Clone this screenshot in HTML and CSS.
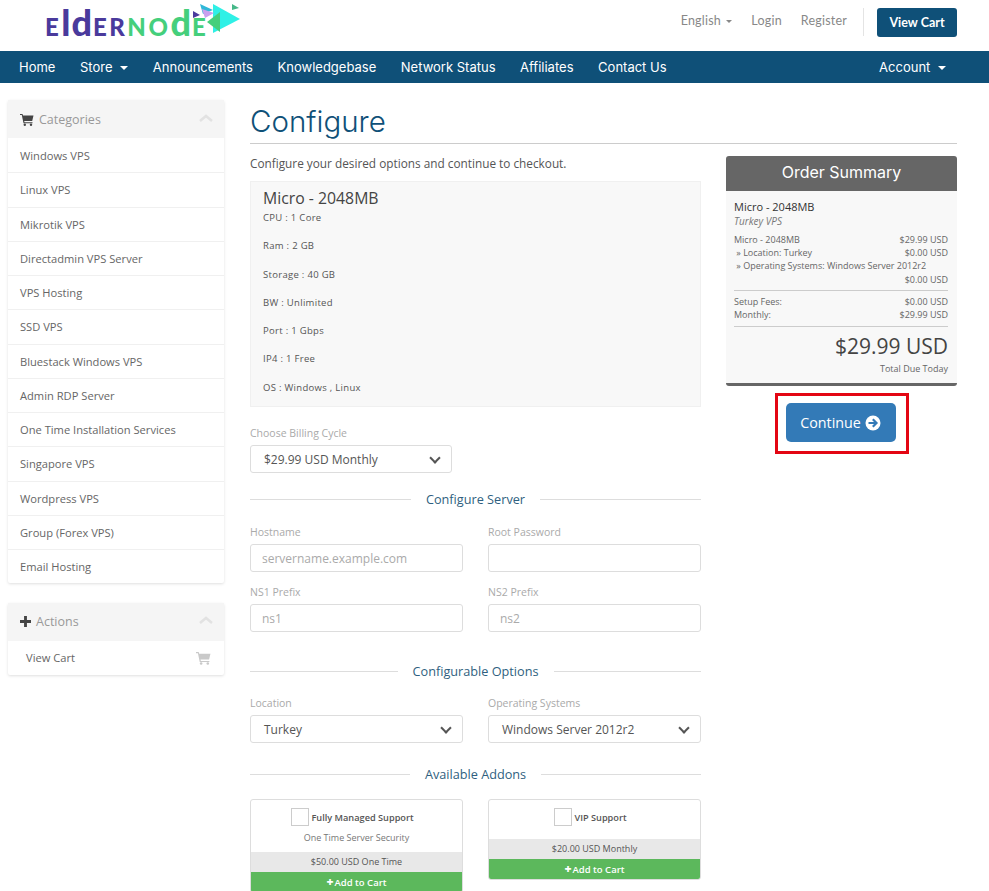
FILE: index.html
```html
<!DOCTYPE html>
<html lang="en">
<head>
  <meta charset="UTF-8">
  <meta name="viewport" content="width=device-width, initial-scale=1.0">
  <title>Configure</title>
  <link rel="stylesheet" href="styles.css">
</head>

<body>
  <header class="top-bar">
    <a class="logo" href="#">
      <span class="logo-elder">E<i>ld</i>ER</span><span class="logo-node">NO<i>d</i>E</span>
      <svg class="logo-mark" width="48" height="34" viewBox="0 0 48 34">
        <polygon points="20,1 47,16 20,30" fill="#2ff0e6"/>
        <polygon points="7,1 20,7 10,11" fill="#2fb8d8"/>
        <polygon points="0,8 7,12 0,15" fill="#4a3a9c"/>
        <polygon points="9,6 21,10 12,15" fill="#c9a0ee"/>
        <polygon points="14,19 27,9 27,29" fill="#45cf7c"/>
        <polygon points="39,1 46,5 39,7" fill="#45b888"/>
      </svg>
    </a>
    <div class="top-links">
      <a href="#">English <span class="caret caret-small"></span></a>
      <a href="#">Login</a>
      <a href="#">Register</a>
      <span class="top-sep"></span>
      <a class="btn-cart" href="#">View Cart</a>
    </div>
  </header>

  <nav class="main-nav">
    <a href="#">Home</a>
    <a href="#">Store <span class="caret"></span></a>
    <a href="#">Announcements</a>
    <a href="#">Knowledgebase</a>
    <a href="#">Network Status</a>
    <a href="#">Affiliates</a>
    <a href="#">Contact Us</a>
    <a class="nav-right" href="#">Account <span class="caret"></span></a>
  </nav>

  <div class="page">
    <aside class="sidebar">
      <div class="panel">
        <div class="panel-head">
          <svg class="head-icon" width="14" height="13" viewBox="0 0 14 13"><path d="M0 1h2.500l.5 1.500h10.500l-1.300 5.500H4.200l.3 1.200h8v1H3.500L1.800 2H0z" fill="#444"/><circle cx="4.800" cy="11.700" r="1.200" fill="#444"/><circle cx="11" cy="11.700" r="1.200" fill="#444"/></svg>
          <span>Categories</span>
          <svg class="chev" width="14" height="8" viewBox="0 0 14 8"><path d="M1 7l6-5 6 5" fill="none" stroke="#e2e2e2" stroke-width="2.500"/></svg>
        </div>
        <a class="panel-row" href="#">Windows VPS</a>
        <a class="panel-row" href="#">Linux VPS</a>
        <a class="panel-row" href="#">Mikrotik VPS</a>
        <a class="panel-row" href="#">Directadmin VPS Server</a>
        <a class="panel-row" href="#">VPS Hosting</a>
        <a class="panel-row" href="#">SSD VPS</a>
        <a class="panel-row" href="#">Bluestack Windows VPS</a>
        <a class="panel-row" href="#">Admin RDP Server</a>
        <a class="panel-row" href="#">One Time Installation Services</a>
        <a class="panel-row" href="#">Singapore VPS</a>
        <a class="panel-row" href="#">Wordpress VPS</a>
        <a class="panel-row" href="#">Group (Forex VPS)</a>
        <a class="panel-row" href="#">Email Hosting</a>
      </div>

      <div class="panel">
        <div class="panel-head">
          <svg class="head-icon" width="11" height="11" viewBox="1 1 10 10"><path d="M4.700 1h2.600v3.700H11v2.600H7.300V11H4.700V7.300H1V4.700h3.700z" fill="#444"/></svg>
          <span>Actions</span>
          <svg class="chev" width="14" height="8" viewBox="0 0 14 8"><path d="M1 7l6-5 6 5" fill="none" stroke="#e2e2e2" stroke-width="2.500"/></svg>
        </div>
        <a class="panel-row panel-action" href="#">
          View Cart
          <svg width="15" height="14" viewBox="0 0 14 13"><path d="M0 1h2.500l.5 1.500h10.500l-1.300 5.500H4.200l.3 1.200h8v1H3.500L1.800 2H0z" fill="#c9c9c9"/><circle cx="4.800" cy="11.700" r="1.200" fill="#c9c9c9"/><circle cx="11" cy="11.700" r="1.200" fill="#c9c9c9"/></svg>
        </a>
      </div>
    </aside>

    <main class="content">
      <h1>Configure</h1>

      <div class="columns">
        <div class="config">
          <p class="intro">Configure your desired options and continue to checkout.</p>

          <div class="product">
            <h3>Micro - 2048MB</h3>
            <p>CPU : 1 Core</p>
            <p>Ram : 2 GB</p>
            <p>Storage : 40 GB</p>
            <p>BW : Unlimited</p>
            <p>Port : 1 Gbps</p>
            <p>IP4 : 1 Free</p>
            <p>OS : Windows , Linux</p>
          </div>

          <label class="field-label billing-label">Choose Billing Cycle</label>
          <div class="field-box billing-box">$29.99 USD Monthly <span class="sel-arrow"></span></div>

          <div class="sub-heading"><span>Configure Server</span></div>
          <div class="form-grid">
            <div>
              <label class="field-label">Hostname</label>
              <div class="field-box placeholder">servername.example.com</div>
            </div>
            <div>
              <label class="field-label">Root Password</label>
              <div class="field-box"></div>
            </div>
            <div>
              <label class="field-label">NS1 Prefix</label>
              <div class="field-box placeholder">ns1</div>
            </div>
            <div>
              <label class="field-label">NS2 Prefix</label>
              <div class="field-box placeholder">ns2</div>
            </div>
          </div>

          <div class="sub-heading options-heading"><span>Configurable Options</span></div>
          <div class="form-grid">
            <div>
              <label class="field-label">Location</label>
              <div class="field-box">Turkey <span class="sel-arrow"></span></div>
            </div>
            <div>
              <label class="field-label">Operating Systems</label>
              <div class="field-box">Windows Server 2012r2 <span class="sel-arrow"></span></div>
            </div>
          </div>

          <div class="sub-heading addons-heading"><span>Available Addons</span></div>
          <div class="addons">
            <div class="addon">
              <div class="addon-title"><span class="check"></span>Fully Managed Support</div>
              <div class="addon-desc">One Time Server Security</div>
              <div class="addon-price">$50.00 USD One Time</div>
              <div class="addon-add"><b>+</b>Add to Cart</div>
            </div>
            <div class="addon">
              <div class="addon-title addon-title-short"><span class="check"></span>VIP Support</div>
              <div class="addon-price">$20.00 USD Monthly</div>
              <div class="addon-add"><b>+</b>Add to Cart</div>
            </div>
          </div>
        </div>

        <div class="summary-col">
          <div class="summary">
            <h2>Order Summary</h2>
            <div class="summary-body">
              <div class="sum-name">Micro - 2048MB</div>
              <div class="sum-group">Turkey VPS</div>
              <div class="sum-row"><span>Micro - 2048MB</span><span>$29.99 USD</span></div>
              <div class="sum-row"><span>&nbsp;» Location: Turkey</span><span>$0.00 USD</span></div>
              <div class="sum-row"><span>&nbsp;» Operating Systems: Windows Server 2012r2</span></div>
              <div class="sum-row sum-end"><span></span><span>$0.00 USD</span></div>
              <div class="sum-line"></div>
              <div class="sum-row"><span>Setup Fees:</span><span>$0.00 USD</span></div>
              <div class="sum-row"><span>Monthly:</span><span>$29.99 USD</span></div>
              <div class="sum-line"></div>
              <div class="sum-total">$29.99 USD</div>
              <div class="sum-due">Total Due Today</div>
            </div>
          </div>
          <div class="continue-wrap">
            <a class="btn-continue" href="#">
              Continue
              <svg width="16" height="16" viewBox="0 0 16 16"><circle cx="8" cy="8" r="7.500" fill="#fff"/><path d="M3.500 8h7.500M7.800 4.300L11.500 8l-3.700 3.700" fill="none" stroke="#337ab7" stroke-width="2.200"/></svg>
            </a>
          </div>
        </div>
      </div>
    </main>
  </div>
</body>
</html>
```

FILE: styles.css
```css
html, body {
  height: 891px;
  overflow: hidden;
}

body {
  margin: 0;
  font-family: "Open Sans", Arial, sans-serif;
  background-color: #fff;
  color: #555;
}

a {
  color: inherit;
  text-decoration: none;
}

/* top bar */
.top-bar {
  height: 51px;
  display: flex;
  justify-content: space-between;
  padding: 0 32px 0 45px;
}

.logo {
  display: flex;
  position: relative;
  padding-top: 3px;
  font-family: "Lato", sans-serif;
  font-weight: 900;
  font-size: 24px;
  letter-spacing: 2.500px;
  line-height: 38px;
}

.logo i {
  font-style: normal;
  font-size: 36px;
  letter-spacing: 1px;
}

.logo-elder {
  color: #4a3a9c;
}

.logo-node {
  color: #45cf7c;
}

.logo-mark {
  position: absolute;
  left: 148px;
  top: 3px;
}

.top-links {
  display: flex;
  align-items: flex-start;
  font-family: "Lato", sans-serif;
  font-size: 12.500px;
  color: #888;
  letter-spacing: 0.200px;
}

.top-links > a {
  margin-left: 19px;
  line-height: 41px;
}

.top-sep {
  width: 1px;
  height: 28px;
  margin: 8px 13px 0 16px;
  background-color: #e4e4e4;
}

.top-links .btn-cart {
  margin: 8px 0 0;
  width: 80px;
  height: 29px;
  line-height: 29px;
  text-align: center;
  color: #fff;
  font-weight: 700;
  letter-spacing: 0;
  background-color: #0f5078;
  border-radius: 3px;
}

.caret {
  display: inline-block;
  border-top: 4px solid #fff;
  border-left: 4px solid transparent;
  border-right: 4px solid transparent;
  margin-left: 4px;
  vertical-align: 2px;
}

.caret-small {
  border-top: 3px solid #888;
  border-left-width: 3px;
  border-right-width: 3px;
  margin-left: 2px;
}

/* main nav */
.main-nav {
  height: 32px;
  display: flex;
  align-items: center;
  gap: 24.600px;
  padding: 0 43px 0 19px;
  background-color: #0f5078;
  color: #fff;
  font-family: "Inter", sans-serif;
  font-size: 13px;
}

.nav-right {
  margin-left: auto;
}

/* page layout */
.page {
  display: flex;
  padding: 17px 32px 0 8px;
  gap: 26px;
}

.sidebar {
  width: 216px;
  flex-shrink: 0;
}

.panel {
  margin-bottom: 19.500px;
  box-shadow: 0 1px 3px rgba(0,0,0,0.13);
  border-radius: 2px;
}

.panel-head {
  height: 38px;
  display: flex;
  align-items: center;
  padding: 0 11px 0 12px;
  background-color: #f5f5f5;
  color: #999;
  font-size: 12.500px;
}

.head-icon {
  margin-right: 5px;
}

.chev {
  margin-left: auto;
  margin-bottom: 3px;
}

.panel-row {
  height: 34.250px;
  box-sizing: border-box;
  display: flex;
  align-items: center;
  justify-content: space-between;
  padding: 0 12px;
  font-size: 11.150px;
  color: #666;
  border-top: 1px solid #f0f0f0;
}

.panel-head + .panel-row {
  border-top: none;
}

.panel-action {
  padding: 0 13px 0 18px;
}

/* main column */
.content {
  flex: 1;
  min-width: 0;
}

h1 {
  margin: 0 0 12px;
  height: 42px;
  padding-top: 1px;
  border-bottom: 1px solid #ccc;
  font-family: "Inter", sans-serif;
  font-weight: 300;
  font-size: 29.500px;
  line-height: 40px;
  color: #0f5078;
}

.columns {
  display: flex;
  gap: 25px;
}

.config {
  width: 451px;
}

.intro {
  margin: -1px 0 10px;
  font-size: 11.800px;
  line-height: 16px;
  color: #555;
}

.product {
  height: 226px;
  box-sizing: border-box;
  padding: 7px 12px;
  background-color: #f8f8f8;
  border: 1px solid #f0f0f0;
}

.product h3 {
  margin: 0 0 3px;
  font-weight: 400;
  font-size: 15.800px;
  line-height: 19px;
  color: #444;
}

.product p {
  margin: 0 0 14.300px;
  font-size: 9.500px;
  line-height: 14px;
  color: #555;
  letter-spacing: 0.300px;
}

.field-label {
  display: block;
  margin-bottom: 5px;
  font-size: 10.500px;
  line-height: 14px;
  color: #aaa;
}

.billing-label {
  margin-top: 19px;
}

.field-box {
  height: 28px;
  box-sizing: border-box;
  display: flex;
  align-items: center;
  justify-content: space-between;
  padding: 0 10px 0 13px;
  background-color: #fff;
  border: 1px solid #ddd;
  border-radius: 3px;
  font-size: 12px;
  color: #555;
}

.billing-box {
  width: 202px;
}

.placeholder {
  padding-left: 11px;
  color: #aaa;
}

.sel-arrow {
  width: 6px;
  height: 6px;
  margin: -3px 2px 0 0;
  border-right: 2px solid #555;
  border-bottom: 2px solid #555;
  transform: rotate(45deg);
}

.sub-heading {
  display: flex;
  align-items: center;
  gap: 15px;
  margin: 16px 0 16px;
  font-size: 12.700px;
  line-height: 20px;
  color: #2f5f80;
}

.sub-heading::before,
.sub-heading::after {
  content: "";
  flex: 1;
  height: 1px;
  background-color: #ddd;
}

.options-heading {
  margin-top: 29px;
  margin-bottom: 15px;
}

.addons-heading {
  margin-top: 21px;
  margin-bottom: 15px;
}

.form-grid {
  display: grid;
  grid-template-columns: 213px 213px;
  column-gap: 25px;
  row-gap: 13px;
}

/* addons */
.addons {
  display: flex;
  align-items: flex-start;
  gap: 25px;
}

.addon {
  width: 213px;
  box-sizing: border-box;
  border: 1px solid #ddd;
  border-radius: 3px;
  text-align: center;
  overflow: hidden;
}

.addon-title {
  display: flex;
  align-items: center;
  justify-content: center;
  gap: 2px;
  padding: 8px 8px 0 0;
  font-size: 9.200px;
  font-weight: 600;
  color: #555;
}

.addon-title-short {
  padding-bottom: 13px;
}

.check {
  width: 16px;
  height: 16px;
  border: 1px solid #ccc;
  background-color: #fff;
}

.addon-desc {
  padding: 5px 0 7px;
  font-size: 9px;
  line-height: 14px;
  color: #777;
}

.addon-price {
  height: 20px;
  line-height: 20px;
  background-color: #e8e8e8;
  font-size: 9px;
  color: #555;
}

.addon-add {
  height: 20px;
  line-height: 20px;
  background-color: #5cb85c;
  color: #fff;
  font-size: 9.500px;
  font-weight: 600;
}

.addon-add b {
  font-size: 12px;
  margin-right: 1px;
}

/* order summary */
.summary-col {
  width: 231px;
}

.summary {
  background-color: #f8f8f8;
  border-bottom: 3px solid #666;
  border-radius: 3px;
}

.summary h2 {
  margin: 0;
  height: 35px;
  line-height: 33px;
  text-align: center;
  background-color: #666;
  color: #fff;
  font-family: "Inter", sans-serif;
  font-weight: 400;
  font-size: 16px;
  border-radius: 3px 3px 0 0;
}

.summary-body {
  padding: 8px 9px 7px 8px;
}

.sum-name {
  font-size: 11px;
  line-height: 15px;
  color: #333;
}

.sum-group {
  margin-bottom: 5px;
  font-size: 10px;
  font-style: italic;
  line-height: 14px;
  color: #777;
}

.sum-row {
  display: flex;
  justify-content: space-between;
  font-size: 9px;
  line-height: 13.200px;
  color: #666;
}

.sum-end {
  margin-bottom: -1px;
}

.sum-line {
  height: 1px;
  margin: 5px 0 4px;
  background-color: #ccc;
}

.sum-total {
  margin-top: 6px;
  text-align: right;
  font-size: 21px;
  line-height: 27px;
  color: #444;
}

.sum-due {
  margin-top: 2px;
  text-align: right;
  font-size: 9px;
  line-height: 14px;
  color: #666;
}

.continue-wrap {
  width: 134px;
  height: 61px;
  box-sizing: border-box;
  margin: 7px auto 0;
  padding: 0 2px 2px 0;
  display: flex;
  align-items: center;
  justify-content: center;
  border: 3px solid #e30613;
}

.btn-continue {
  width: 110px;
  height: 39px;
  display: flex;
  align-items: center;
  justify-content: center;
  gap: 4px;
  background-color: #337ab7;
  border-radius: 5px;
  color: #fff;
  font-size: 14.300px;
}
```
